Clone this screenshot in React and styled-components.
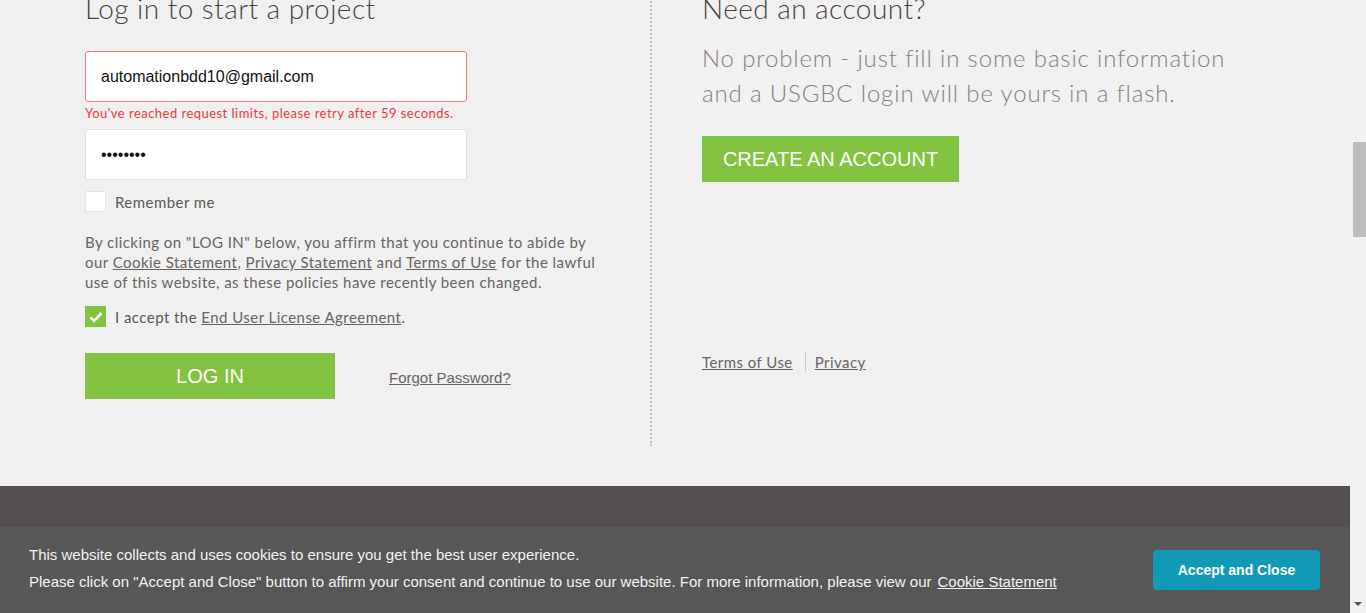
import React from "react";
import styled, { createGlobalStyle } from "styled-components";

const GlobalStyle = createGlobalStyle`
  html, body {
    margin: 0;
    padding: 0;
    height: 100%;
    overflow: hidden;
    background: #eff0ef;
  }
  body {
    font-family: "Lato", "Liberation Sans", sans-serif;
    color: #6b6464;
  }
  * { box-sizing: border-box; }
`;

const Screen = styled.div`
  display: flex;
  height: 613px;
  width: 1366px;
  overflow: hidden;
`;

const Page = styled.div`
  flex: 1;
  display: flex;
  flex-direction: column;
  background: #eff0ef;
`;

const Main = styled.main`
  display: flex;
  margin-top: -10px;
  padding-left: 85px;
`;

const LeftColumn = styled.section`
  width: 567px;
  padding-bottom: 47px;
  border-right: 2px dotted #bdbdbd;
`;

const RightColumn = styled.section`
  flex: 1;
  padding-left: 50px;
  display: flex;
  flex-direction: column;
`;

const Heading = styled.h1`
  margin: 0;
  font-family: "Lato", sans-serif;
  font-weight: 300;
  font-size: 28px;
  line-height: 36px;
  color: #4a4545;
  letter-spacing: 0.45px;
`;

const Form = styled.form`
  display: flex;
  flex-direction: column;
  margin-top: 25px;
`;

const Input = styled.input`
  width: 382px;
  height: 51px;
  padding: 0 15px;
  border: 1px solid ${(p) => (p.$error ? "#f27c7c" : "#e2e2e2")};
  border-radius: 3px;
  background: #fff;
  font-family: "Liberation Sans", Arial, sans-serif;
  font-size: 16px;
  color: #111;
  outline: none;
`;

const ErrorText = styled.div`
  font-size: 13px;
  line-height: 16px;
  letter-spacing: 0.47px;
  margin: 3px 0 8px;
  color: #f2383d;
`;

const CheckRow = styled.label`
  display: flex;
  align-items: center;
  gap: 9px;
  font-size: 15px;
  line-height: 20px;
  letter-spacing: 0.45px;
  color: #5e5858;
  margin-top: ${(p) => p.$top || 0}px;
`;

const Box = styled.span`
  width: 21px;
  height: 21px;
  display: flex;
  align-items: center;
  justify-content: center;
  background: ${(p) => (p.$checked ? "#82c341" : "#fff")};
  border: 1px solid ${(p) => (p.$checked ? "#82c341" : "#e4e4e4")};
`;

const Legal = styled.p`
  margin: 20px 0 0;
  font-size: 15px;
  line-height: 20px;
  letter-spacing: 0.45px;
  color: #6b6464;
  width: 518px;
`;

const TextLink = styled.a`
  color: #6b6464;
  text-decoration: underline;
  cursor: pointer;
`;

const ActionRow = styled.div`
  display: flex;
  align-items: center;
  margin-top: 26px;
`;

const GreenButton = styled.button`
  height: 46px;
  width: ${(p) => p.$width}px;
  border: none;
  background: #82c341;
  color: #fff;
  font-family: "Liberation Sans", Arial, sans-serif;
  font-size: 20px;
  text-transform: uppercase;
  cursor: pointer;
  padding: 0;
`;

const ForgotLink = styled.a`
  margin-left: 54px;
  margin-top: 3px;
  font-family: "Liberation Sans", Arial, sans-serif;
  font-size: 15px;
  color: #6b6464;
  text-decoration: underline;
`;

const Lead = styled.p`
  margin: 14px 0 26px;
  font-family: "Lato", sans-serif;
  font-weight: 300;
  font-size: 24px;
  line-height: 35px;
  color: #8a8080;
  letter-spacing: 0.85px;
`;

const LinkRow = styled.div`
  display: flex;
  align-items: center;
  margin-top: 170px;
  font-size: 15px;
  letter-spacing: 0.45px;
`;

const Divider = styled.span`
  width: 1px;
  height: 20px;
  background: #c8c8c8;
  margin: 0 9px 0 12px;
`;

const Footer = styled.footer`
  margin-top: 40px;
  flex: 1;
  background: #544f4f;
`;

const Scrollbar = styled.div`
  width: 16px;
  background: #f0f1f0;
  display: flex;
  flex-direction: column;
  align-items: center;
`;

const Thumb = styled.div`
  margin-top: 142px;
  width: 13px;
  height: 95px;
  margin-left: 2px;
  background: #bdbdbd;
`;

const ArrowDown = styled.div`
  margin-top: auto;
  margin-bottom: 7px;
  width: 0;
  height: 0;
  border-left: 4px solid transparent;
  border-right: 4px solid transparent;
  border-top: 4px solid #505050;
`;

const CookieBanner = styled.div`
  position: fixed;
  left: 0;
  bottom: 0;
  width: 1350px;
  height: 86px;
  background: #575757;
  display: flex;
  align-items: center;
  justify-content: space-between;
  padding: 0 30px 0 29px;
  font-family: "Liberation Sans", Arial, sans-serif;
  color: #f2f2f2;
  font-size: 15px;
`;

const CookieText = styled.div`
  display: flex;
  flex-direction: column;
  gap: 8px;
  margin-top: -4px;
  line-height: 19px;
`;

const CookieLink = styled.a`
  color: #f2f2f2;
  text-decoration: underline;
  margin-left: 6px;
`;

const AcceptButton = styled.button`
  width: 167px;
  height: 40px;
  border: none;
  border-radius: 4px;
  background: #1199b5;
  color: #fff;
  font-family: "Liberation Sans", Arial, sans-serif;
  font-weight: 700;
  font-size: 14px;
`;

const Check = () => (
  <svg width="14" height="12" viewBox="0 0 14 12">
    <path d="M1.5 6.5 L5.2 10 L12.5 2" fill="none" stroke="#fff" strokeWidth="2.6" />
  </svg>
);

export default function App() {
  return (
    <>
      <GlobalStyle />
      <Screen>
        <Page>
          <Main>
            <LeftColumn>
              <Heading>Log in to start a project</Heading>
              <Form onSubmit={(e) => e.preventDefault()}>
                <Input $error defaultValue="automationbdd10@gmail.com" />
                <ErrorText>
                  You've reached request limits, please retry after 59 seconds.
                </ErrorText>
                <Input type="password" defaultValue="password" />
                <CheckRow $top={11}>
                  <Box />
                  Remember me
                </CheckRow>
                <Legal>
                  By clicking on "LOG IN" below, you affirm that you continue to
                  abide by our <TextLink>Cookie Statement</TextLink>,{" "}
                  <TextLink>Privacy Statement</TextLink> and{" "}
                  <TextLink>Terms of Use</TextLink> for the lawful use of this
                  website, as these policies have recently been changed.
                </Legal>
                <CheckRow $top={14}>
                  <Box $checked>
                    <Check />
                  </Box>
                  <span>
                    I accept the <TextLink>End User License Agreement</TextLink>.
                  </span>
                </CheckRow>
                <ActionRow>
                  <GreenButton $width={250}>Log In</GreenButton>
                  <ForgotLink>Forgot Password?</ForgotLink>
                </ActionRow>
              </Form>
            </LeftColumn>
            <RightColumn>
              <Heading>Need an account?</Heading>
              <Lead>
                No problem - just fill in some basic information
                <br />
                and a USGBC login will be yours in a flash.
              </Lead>
              <div>
                <GreenButton $width={257}>Create an account</GreenButton>
              </div>
              <LinkRow>
                <TextLink>Terms of Use</TextLink>
                <Divider />
                <TextLink>Privacy</TextLink>
              </LinkRow>
            </RightColumn>
          </Main>
          <Footer />
        </Page>
        <Scrollbar>
          <Thumb />
          <ArrowDown />
        </Scrollbar>
      </Screen>
      <CookieBanner>
        <CookieText>
          <span>
            This website collects and uses cookies to ensure you get the best
            user experience.
          </span>
          <span>
            Please click on "Accept and Close" button to affirm your consent and
            continue to use our website. For more information, please view our
            <CookieLink>Cookie Statement</CookieLink>
          </span>
        </CookieText>
        <AcceptButton>Accept and Close</AcceptButton>
      </CookieBanner>
    </>
  );
}
